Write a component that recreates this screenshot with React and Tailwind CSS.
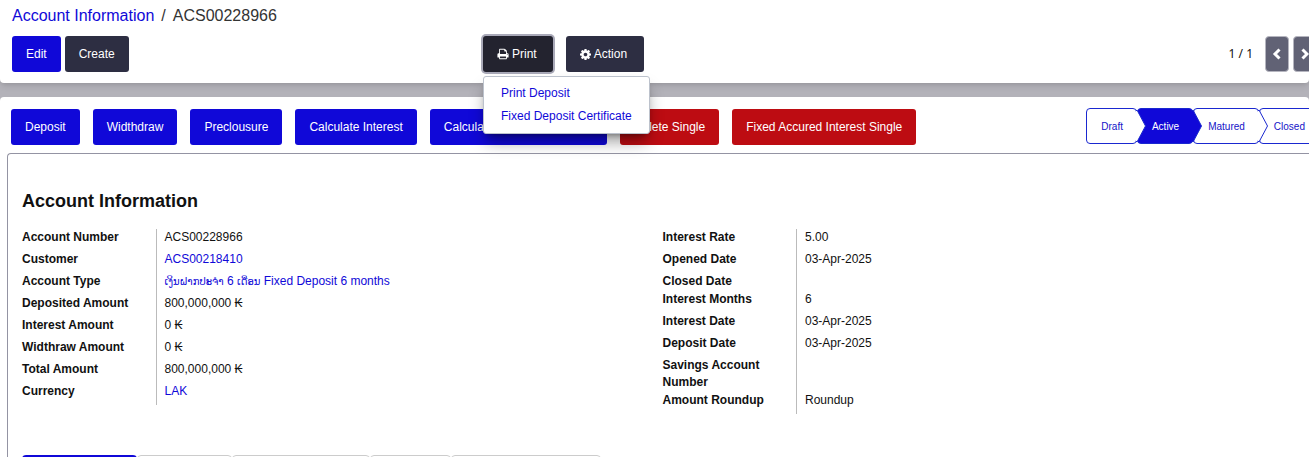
import React from 'react';

const actions = [
  { label: 'Deposit' },
  { label: 'Widthdraw' },
  { label: 'Preclousure' },
  { label: 'Calculate Interest' },
  { label: 'Calculate', wide: true },
  { label: 'Delete Single', danger: true },
  { label: 'Fixed Accured Interest Single', danger: true },
];

const steps = ['Draft', 'Active', 'Matured', 'Closed'];
const currentStep = 'Active';

// Lao glyphs run large next to the latin text
const accountType = (
  <>
    <span lang="lo" className="text-[10px]">ເງິນຝາກປະຈຳ</span> 6{' '}
    <span lang="lo" className="text-[10px]">ເດືອນ</span> Fixed Deposit 6 months
  </>
);

const leftFields = [
  { label: 'Account Number', value: 'ACS00228966' },
  { label: 'Customer', value: 'ACS00218410', link: true },
  { label: 'Account Type', value: accountType, link: true },
  { label: 'Deposited Amount', value: '800,000,000 ₭' },
  { label: 'Interest Amount', value: '0 ₭' },
  { label: 'Widthraw Amount', value: '0 ₭' },
  { label: 'Total Amount', value: '800,000,000 ₭' },
  { label: 'Currency', value: 'LAK', link: true },
];

const rightFields = [
  { label: 'Interest Rate', value: '5.00' },
  { label: 'Opened Date', value: '03-Apr-2025' },
  { label: 'Closed Date', value: '' },
  { label: 'Interest Months', value: '6' },
  { label: 'Interest Date', value: '03-Apr-2025' },
  { label: 'Deposit Date', value: '03-Apr-2025' },
  { label: 'Savings Account Number', value: '' },
  { label: 'Amount Roundup', value: 'Roundup' },
];

function PrintIcon() {
  return (
    <svg viewBox="0 0 1792 1792" className="w-3 h-3" fill="currentColor" aria-hidden="true">
      <path d="M448 1536h896v-256h-896v256zm0-640h896v-384h-160q-40 0-68-28t-28-68v-160h-640v640zm1152 64q0-26-19-45t-45-19-45 19-19 45 19 45 45 19 45-19 19-45zm128 0v416q0 13-9.5 22.5t-22.5 9.5h-224v160q0 40-28 68t-68 28h-960q-40 0-68-28t-28-68v-160h-224q-13 0-22.5-9.5t-9.5-22.5v-416q0-79 56.5-135.5t135.5-56.5h64v-544q0-40 28-68t68-28h672q40 0 88 20t76 48l152 152q28 28 48 76t20 88v256h64q79 0 135.5 56.5t56.5 135.5z" />
    </svg>
  );
}

function CogIcon() {
  return (
    <svg viewBox="128 128 1536 1536" className="w-[11px] h-[11px]" fill="currentColor" aria-hidden="true">
      <path d="M1152 896q0-106-75-181t-181-75-181 75-75 181 75 181 181 75 181-75 75-181zm512-109v222q0 12-8 23t-20 13l-185 28q-19 54-39 91 35 50 107 138 10 12 10 25t-9 23q-27 37-99 108t-94 71q-12 0-26-9l-138-108q-44 23-91 38-16 136-29 186-7 28-36 28h-222q-14 0-24.5-8.5t-11.5-21.5l-28-184q-49-16-90-37l-141 107q-10 9-25 9-14 0-25-11-126-114-165-168-7-10-7-23 0-12 8-23 15-21 51-66.5t54-70.5q-27-50-41-99l-183-27q-13-2-21-12.5t-8-23.5v-222q0-12 8-23t19-13l186-28q14-46 39-92-40-57-107-138-10-12-10-24 0-10 9-23 26-36 98.5-107.5t94.5-71.5q13 0 26 10l138 107q44-23 91-38 16-136 29-186 7-28 36-28h222q14 0 24.5 8.5t11.5 21.5l28 184q49 16 90 37l142-107q9-9 24-9 13 0 25 10 129 119 165 170 7 8 7 22 0 12-8 23-15 21-51 66.5t-54 70.5q26 50 41 98l183 28q13 2 21 12.5t8 23.5z" />
    </svg>
  );
}

function PagerButton({ d, label }) {
  return (
    <button
      aria-label={label}
      className="w-6 h-9 flex items-center justify-center rounded border border-[#b5b5bf] bg-[#616275] text-white"
    >
      <svg viewBox="0 0 10 12" className="w-2.5 h-3" fill="none" stroke="currentColor" strokeWidth="3" aria-hidden="true">
        <path d={d} />
      </svg>
    </button>
  );
}

function StatusBar() {
  return (
    <div className="flex flex-shrink-0">
      {steps.map((step, i) => {
        const active = step === currentStep;
        return (
          <button
            key={step}
            className={`relative h-9 pl-3.5 pr-[13px] rounded border border-[#1a28d0] text-[10px] ${
              active ? 'bg-[#1008d8] text-white' : 'bg-white text-[#1414c8]'
            }`}
            style={{ zIndex: steps.length - i }}
          >
            {step}
            {/* arrow head, lies over the start of the next step */}
            {i < steps.length - 1 && (
              <svg
                viewBox="0 0 12 36"
                className={`absolute -top-px left-full w-3 h-9 ${active ? 'fill-[#1008d8]' : 'fill-white'}`}
                aria-hidden="true"
              >
                <path d="M0 3L1 2L9.5 18L1 34L0 33" stroke="#1a28d0" />
              </svg>
            )}
          </button>
        );
      })}
    </div>
  );
}

function FieldGroup({ fields }) {
  return (
    <table className="self-start w-full border-collapse text-xs">
      <tbody>
        {fields.map((field) => (
          <tr key={field.label}>
            <th
              scope="row"
              className="w-[134px] p-0 pb-px pr-5 border-r border-[#bbb] text-left align-top font-bold leading-[17px]"
            >
              {field.label}
            </th>
            <td className="p-0 pl-2 align-top leading-[17px]">
              {field.value && (
                <div className="h-[22px]">
                  {field.link ? (
                    <a href="#" className="text-[#1008d8]">{field.value}</a>
                  ) : (
                    field.value
                  )}
                </div>
              )}
            </td>
          </tr>
        ))}
      </tbody>
    </table>
  );
}

export default function App() {
  return (
    <div className="h-screen flex flex-col overflow-hidden bg-[#b3b2b9] text-[#111] font-['Liberation_Sans','DejaVu_Sans',sans-serif]">
      <header className="relative z-10 pt-1 pb-[11px] bg-white rounded-b-sm shadow-md">
        <nav className="px-3 flex gap-[7px] text-base leading-6 text-[#333]">
          <a href="#" className="text-[#1008d8]">Account Information</a>
          <span>/</span>
          <span>ACS00228966</span>
        </nav>

        <div className="flex items-center pt-2 text-xs">
          <div className="w-[36.9%] pl-3 flex gap-1">
            <button className="h-9 px-3.5 rounded-[3px] bg-[#1008d8] text-white">Edit</button>
            <button className="h-9 px-3.5 rounded-[3px] bg-[#2d2e42] text-white">Create</button>
          </div>

          <div className="flex gap-[13px]">
            <div className="relative">
              <button className="h-9 pl-3.5 pr-4 flex items-center gap-[3px] rounded-[3px] bg-[#23232f] text-white ring-2 ring-[#a9a9b8]">
                <PrintIcon />
                Print
              </button>
              <div className="absolute top-10 left-0 py-[5px] rounded-[3px] border border-[#bcc2cc] bg-white shadow-lg shadow-black/40 whitespace-nowrap">
                <a href="#" className="block px-[17px] leading-[23px] text-[#1008d8]">Print Deposit</a>
                <a href="#" className="block px-[17px] leading-[23px] text-[#1008d8]">Fixed Deposit Certificate</a>
              </div>
            </div>
            <button className="h-9 pl-3.5 pr-[17px] flex items-center gap-[3px] rounded-[3px] bg-[#2d2e42] text-white">
              <CogIcon />
              Action
            </button>
          </div>

          <div className="ml-auto -mr-2 flex items-center gap-1">
            <span className="pr-2 font-['Noto_Sans',sans-serif]">1 / 1</span>
            <PagerButton label="Previous" d="M7.5 1.5L3 6l4.5 4.5" />
            <PagerButton label="Next" d="M2.5 1.5L7 6l-4.5 4.5" />
          </div>
        </div>
      </header>

      <main className="flex-1 mt-3.5 pt-3 bg-white rounded-t-sm">
        <div className="flex items-start justify-between">
          <div className="flex gap-[13px] pl-[11px] text-xs">
            {actions.map((action) => (
              <button
                key={action.label}
                className={`h-9 px-3.5 rounded-[3px] text-white text-left whitespace-nowrap ${
                  action.danger ? 'bg-[#bd0c12]' : 'bg-[#1008d8]'
                } ${action.wide ? 'w-[177px]' : ''}`}
              >
                {action.label}
              </button>
            ))}
          </div>
          <div className="-mr-2.5 -mt-px">
            <StatusBar />
          </div>
        </div>

        <section className="ml-[7px] -mr-2 mt-2 h-full px-3.5 pt-[35px] rounded-tl border-t border-l border-[#9494a3]">
          <h2 className="text-lg leading-6 font-bold">Account Information</h2>
          <div className="grid grid-cols-2 pt-4">
            <FieldGroup fields={leftFields} />
            <FieldGroup fields={rightFields} />
          </div>

          {/* notebook tabs */}
          <div className="flex pt-[41px]">
            <div className="w-[115px] h-8 rounded-t bg-[#1008d8]" />
            <div className="w-[95px] h-8 rounded-t border border-[#ccc]" />
            <div className="w-[138px] h-8 rounded-t border border-[#ccc]" />
            <div className="w-[81px] h-8 rounded-t border border-[#ccc]" />
            <div className="w-[150px] h-8 rounded-t border border-[#ccc]" />
          </div>
        </section>
      </main>
    </div>
  );
}
